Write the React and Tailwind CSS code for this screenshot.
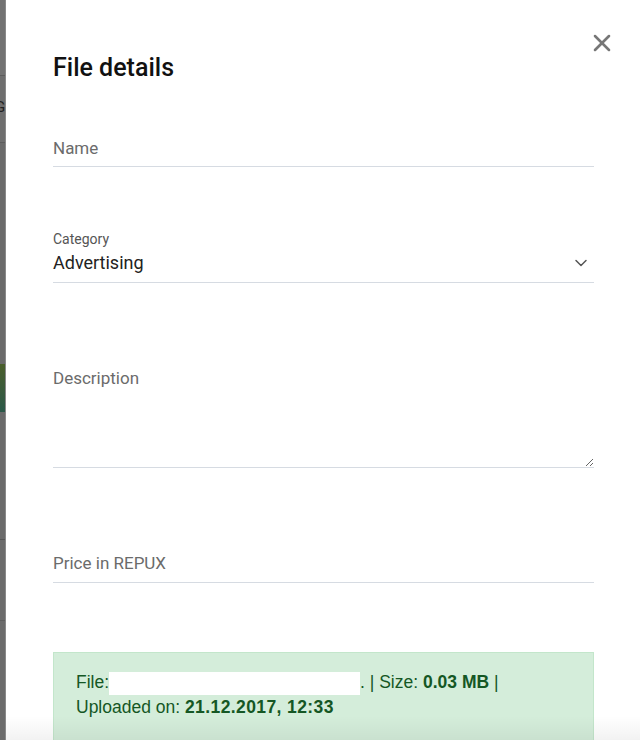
import React from "react";
import { ChevronDown, X } from "lucide-react";

export default function App() {
  return (
    <div className="flex h-[740px] w-[640px] overflow-hidden bg-white">
      {/* background page peeking on the left */}
      <div className="flex w-[6px] shrink-0 flex-col border-r border-[#8a8a8a] bg-[#6b6b6b]">
        <div className="h-[75px] bg-[#727272]" />
        <div className="h-px bg-[#5c5c5c]" />
        <div className="relative h-[66px] overflow-hidden bg-[#6e6e6e]">
          <span className="absolute left-[-5px] top-[24px] text-[15px] leading-none text-[#222]" style={{ fontFamily: "Roboto, sans-serif" }}>G</span>
        </div>
        <div className="h-px bg-[#5c5c5c]" />
        <div className="h-[221px] bg-[#6a6a6a]" />
        <div className="h-[48px] bg-gradient-to-b from-[#4a5e2a] to-[#2a5848]" />
        <div className="h-[127px] bg-[#6a6a6a]" />
        <div className="h-px bg-[#555]" />
        <div className="h-[80px] bg-[#6b6b6b]" />
        <div className="h-px bg-[#5e5e5e]" />
        <div className="flex-1 bg-[#6b6b6b]" />
      </div>

      {/* modal */}
      <div className="relative flex-1 bg-white pl-[47px] pr-[46px] pt-[52px]">
        <button className="absolute right-[24px] top-[29px] text-[#777]">
          <X size={28} strokeWidth={2.2} />
        </button>

        <h2
          className="text-[25px] font-medium leading-[32px] text-[#111]"
          style={{ fontFamily: "Roboto, 'Liberation Sans', sans-serif" }}
        >
          File details
        </h2>

        <div style={{ fontFamily: "Roboto, 'Liberation Sans', sans-serif" }}>
          {/* Name */}
          <div className="mt-[52px] border-b border-[#d6dbe2] pb-[6px]">
            <input
              className="block h-[24px] w-full bg-transparent text-[17px] leading-[24px] text-[#222] outline-none placeholder:text-[#6b6b6b]"
              placeholder="Name"
            />
          </div>

          {/* Category */}
          <div className="mt-[64px] border-b border-[#d6dbe2] pb-[7px]">
            <div className="text-[14px] leading-[16px] text-[#555]">Category</div>
            <div className="mt-[4px] flex h-[24px] items-center justify-between">
              <span className="text-[18px] leading-[24px] text-[#222]">Advertising</span>
              <ChevronDown size={20} strokeWidth={1.8} className="mr-[3px] text-[#555]" />
            </div>
          </div>

          {/* Description */}
          <textarea
            className="mt-[83px] block h-[102px] w-full resize-y border-b border-[#d6dbe2] bg-transparent text-[17px] leading-[24px] text-[#222] outline-none placeholder:text-[#6b6b6b]"
            placeholder="Description"
          />

          {/* Price */}
          <div className="mt-[83px] border-b border-[#d6dbe2] pb-[7px]">
            <input
              className="block h-[24px] w-full bg-transparent text-[17px] leading-[24px] text-[#222] outline-none placeholder:text-[#6b6b6b]"
              placeholder="Price in REPUX"
            />
          </div>
        </div>

        {/* Alert */}
        <div
          className="mt-[69px] border border-[#c3e6cb] bg-[#d4edda] pb-[20px] pl-[22px] pr-[20px] pt-[17px] text-[17.5px] leading-[25px] text-[#155724]"
          style={{ fontFamily: "'Liberation Sans', Arial, sans-serif" }}
        >
          <div>
            File:
            <span className="inline-block h-[23px] w-[251px] bg-white align-middle" />
            . | Size: <b>0.03 MB</b> |
          </div>
          <div>
            Uploaded on: <b className="tracking-[0.4px]">21.12.2017, 12:33</b>
          </div>
        </div>

        <div className="pointer-events-none absolute bottom-0 left-0 right-0 h-[24px] bg-gradient-to-b from-transparent to-[#0000000d]" />
      </div>
    </div>
  );
}
